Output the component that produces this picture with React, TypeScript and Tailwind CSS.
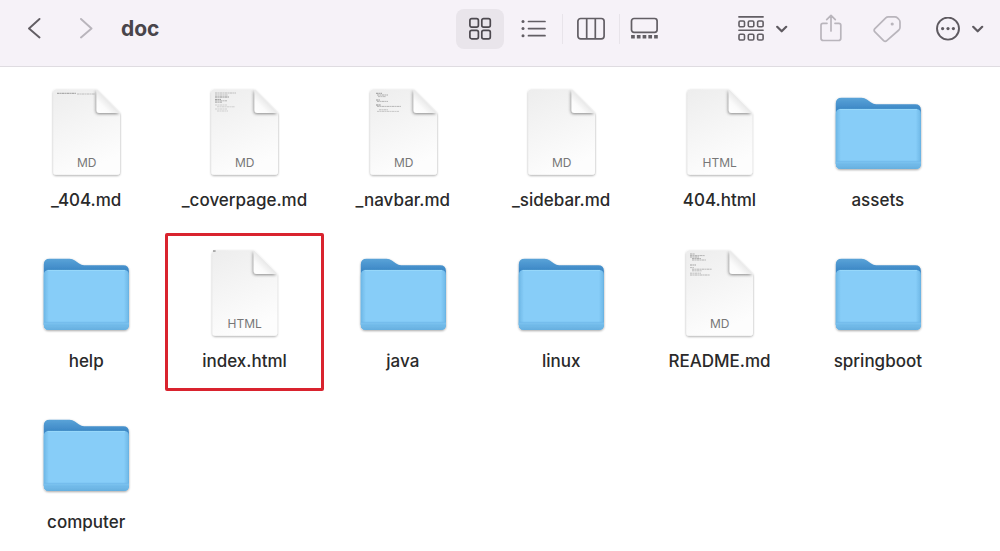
import { useState, type ReactNode } from "react";

type Mark = [x: number, y: number, width: number, tone: number];

type Entry = {
  name: string;
  kind: "folder" | "MD" | "HTML";
  preview?: Mark[];
  highlighted?: boolean;
};

const entries: Entry[] = [
  {
    name: "_404.md",
    kind: "MD",
    preview: [
      [19, 9.3, 19, 0.5],
      [39, 10, 18, 0.3],
    ],
  },
  {
    name: "_coverpage.md",
    kind: "MD",
    preview: [
      [19, 9, 21, 0.3],
      [19, 11, 13, 0.3],
      [19, 13, 14, 0.55],
      [19, 15.4, 6, 0.5],
      [19, 16.8, 12, 0.35],
      [19, 18.2, 7, 0.4],
      [19, 21, 12, 0.2],
      [21, 22.8, 18, 0.2],
      [19, 25, 12, 0.2],
      [21, 27, 11, 0.2],
    ],
  },
  {
    name: "_navbar.md",
    kind: "MD",
    preview: [
      [21, 9.3, 6, 0.5],
      [22, 11, 11, 0.4],
      [23, 12.6, 8, 0.3],
      [21, 16, 4, 0.5],
      [22, 17.4, 11, 0.35],
      [21, 21, 5, 0.6],
      [22, 22.4, 24, 0.35],
      [24, 25.8, 9, 0.3],
      [22, 27.4, 22, 0.25],
    ],
  },
  { name: "_sidebar.md", kind: "MD" },
  { name: "404.html", kind: "HTML" },
  { name: "assets", kind: "folder" },
  { name: "help", kind: "folder" },
  { name: "index.html", kind: "HTML", highlighted: true, preview: [[17, 6, 3, 0.8]] },
  { name: "java", kind: "folder" },
  { name: "linux", kind: "folder" },
  {
    name: "README.md",
    kind: "MD",
    preview: [
      [19, 9, 5, 0.4],
      [19, 10.6, 15, 0.35],
      [19, 12, 9, 0.4],
      [21, 13.6, 9, 0.4],
      [21, 15, 14, 0.35],
      [19, 20, 6, 0.45],
      [19, 22.6, 4, 0.3],
      [21, 24.2, 20, 0.35],
      [21, 25.8, 10, 0.3],
      [19, 28.2, 11, 0.3],
      [19, 30, 20, 0.35],
    ],
  },
  { name: "springboot", kind: "folder" },
  { name: "computer", kind: "folder" },
];

const pagePath = {
  MD: "M18.3 5.6H58.6L82 29V88q0 2.700-2.700 2.700H18q-2.700 0-2.700-2.700V8.600q0-3 3-3z",
  HTML: "M19.500 5.600H57.800L81.200 29V88q0 2.700-2.700 2.700H19.200q-2.700 0-2.700-2.700V8.600q0-3 3-3z",
};

const foldPath = {
  MD: "M58.600 5.600L82 29H61.600q-3 0-3-3z",
  HTML: "M57.800 5.600L81.200 29H60.800q-3 0-3-3z",
};

function SharedGradients() {
  return (
    <svg className="absolute size-0" aria-hidden="true">
      <defs>
        <linearGradient id="paper" x1="0" y1="0" x2="0.350" y2="1">
          <stop offset="0" stopColor="#ededed" />
          <stop offset="0.500" stopColor="#f5f5f5" />
          <stop offset="1" stopColor="#fdfdfd" />
        </linearGradient>
        <linearGradient id="fold" x1="0" y1="1" x2="0.500" y2="0.500">
          <stop offset="0" stopColor="#ffffff" />
          <stop offset="0.550" stopColor="#fbfbfb" />
          <stop offset="1" stopColor="#e9e9e9" />
        </linearGradient>
        <linearGradient id="folderBack" x1="0" y1="0" x2="0" y2="1">
          <stop offset="0" stopColor="#5aa3d8" />
          <stop offset="0.160" stopColor="#3d88c6" />
          <stop offset="1" stopColor="#3d88c6" />
        </linearGradient>
        <linearGradient id="folderEdge" x1="0" y1="0" x2="1" y2="0">
          <stop offset="0" stopColor="#6db7e6" />
          <stop offset="0.060" stopColor="#87cdf8" />
          <stop offset="0.940" stopColor="#87cdf8" />
          <stop offset="1" stopColor="#6db7e6" />
        </linearGradient>
        <linearGradient id="folderBase" x1="0" y1="0" x2="0" y2="1">
          <stop offset="0" stopColor="#7cc3f0" />
          <stop offset="1" stopColor="#66afdf" />
        </linearGradient>
        <filter id="iconShadow" x="-10%" y="-10%" width="120%" height="120%">
          <feDropShadow dx="0" dy="0.900" stdDeviation="0.800" floodColor="#000" floodOpacity="0.360" />
        </filter>
        <filter id="foldShadow" x="-30%" y="-30%" width="160%" height="160%">
          <feDropShadow dx="-0.800" dy="1" stdDeviation="1.500" floodColor="#000" floodOpacity="0.450" />
        </filter>
        <clipPath id="clipMD">
          <path d={pagePath.MD} />
        </clipPath>
        <clipPath id="clipHTML">
          <path d={pagePath.HTML} />
        </clipPath>
      </defs>
    </svg>
  );
}

function FolderIcon() {
  return (
    <svg viewBox="0 0 96 96" className="size-24" aria-hidden="true">
      <g filter="url(#iconShadow)">
        <path
          d="M5.800 19.500q0-5.800 5.800-5.800h20q3 0 5.300 1.700l4.200 3.200q2.200 1.700 5 1.700h39.200q5.600 0 5.600 5.600v53.500q0 5.300-5.300 5.300h-74.500q-5.300 0-5.300-5.300z"
          fill="url(#folderBack)"
        />
        <path
          d="M5.800 30q0-5 5-5h75.100q5 0 5 5v49.400q0 5.500-5.500 5.500h-74.100q-5.500 0-5.500-5.500z"
          fill="url(#folderEdge)"
        />
      </g>
      <path d="M5.800 77.500h85.100v1.900q0 5.500-5.500 5.500h-74.100q-5.500 0-5.500-5.500z" fill="url(#folderBase)" />
      <path d="M6 77.300h84.500" stroke="#6fb8e8" strokeWidth="0.800" />
      <path d="M6 80.300h84.500" stroke="#6cb5e5" strokeWidth="0.500" />
      <path d="M9.500 25.400h77.500" stroke="#9ddafb" strokeWidth="0.800" />
    </svg>
  );
}

function DocumentIcon({ kind, preview = [] }: { kind: "MD" | "HTML"; preview?: Mark[] }) {
  return (
    <svg viewBox="0 0 96 96" className="size-24" aria-hidden="true">
      <path d={pagePath[kind]} fill="url(#paper)" filter="url(#iconShadow)" />
      {preview.map(([x, y, width, tone], i) => (
        <path
          key={i}
          d={`M${x} ${y}h${width}`}
          stroke="#333"
          strokeWidth="0.900"
          strokeDasharray="2.600 0.500 1.500 0.400"
          opacity={tone}
        />
      ))}
      <g clipPath={kind === "MD" ? "url(#clipMD)" : "url(#clipHTML)"}>
        <path d={foldPath[kind]} fill="url(#fold)" filter="url(#foldShadow)" />
      </g>
      <text x="48.700" y="83" textAnchor="middle" fontFamily="Inter, sans-serif" fontSize="12" fill="#777">
        {kind}
      </text>
    </svg>
  );
}

function Chevron() {
  return (
    <svg viewBox="0 0 12 12" className="size-3" fill="none" stroke="#5e5a60" strokeWidth="2.200" strokeLinecap="round" strokeLinejoin="round" aria-hidden="true">
      <path d="M1.200 3.800 5.700 8.300 10.200 3.800" />
    </svg>
  );
}

function GridIcon() {
  return (
    <svg viewBox="0 0 24 24" className="size-6" fill="none" stroke="#4d494f" strokeWidth="1.700" aria-hidden="true">
      <rect x="1.900" y="1.600" width="8.500" height="8.500" rx="1.800" />
      <rect x="13.800" y="1.600" width="8.500" height="8.500" rx="1.800" />
      <rect x="1.900" y="13.300" width="8.500" height="8.500" rx="1.800" />
      <rect x="13.800" y="13.300" width="8.500" height="8.500" rx="1.800" />
    </svg>
  );
}

function ListIcon() {
  return (
    <svg viewBox="0 0 26 24" className="h-6 w-[26px]" fill="none" stroke="#625e64" strokeWidth="1.700" strokeLinecap="round" aria-hidden="true">
      <path d="M7.500 4.500H24M7.500 11.600H24M7.500 18.700H24" />
      <g fill="#625e64" stroke="none">
        <circle cx="2" cy="4.500" r="1.500" />
        <circle cx="2" cy="11.600" r="1.500" />
        <circle cx="2" cy="18.700" r="1.500" />
      </g>
    </svg>
  );
}

function ColumnsIcon() {
  return (
    <svg viewBox="0 0 28 24" className="h-6 w-7" fill="none" stroke="#625e64" strokeWidth="1.700" aria-hidden="true">
      <rect x="0.900" y="1.500" width="26.200" height="20.400" rx="2.800" />
      <path d="M9.700 1.500v20.400M18.300 1.500v20.400" />
    </svg>
  );
}

function GalleryIcon() {
  return (
    <svg viewBox="0 0 28 24" className="h-6 w-7" fill="none" stroke="#625e64" strokeWidth="1.700" aria-hidden="true">
      <rect x="1.500" y="1.500" width="25.600" height="13.800" rx="2.500" />
      <path d="M1.100 19.800h27" strokeWidth="3.400" strokeDasharray="3.700 2.050" />
    </svg>
  );
}

function GroupIcon() {
  return (
    <svg viewBox="0 0 26 26" className="size-[26px]" fill="none" stroke="#625e64" strokeWidth="1.600" strokeLinecap="round" aria-hidden="true">
      <path d="M0.900 0.900h24.200M0.900 14.300h24.200" />
      {[1, 10.3, 19.6].map((x) => (
        <g key={x}>
          <rect x={x} y="5" width="5.500" height="5.700" rx="1.300" />
          <rect x={x} y="18.300" width="5.500" height="5.700" rx="1.300" />
        </g>
      ))}
    </svg>
  );
}

function ShareIcon() {
  return (
    <svg viewBox="0 0 24 30" className="h-[30px] w-6" fill="none" stroke="#b9b5bc" strokeWidth="1.700" strokeLinecap="round" strokeLinejoin="round" aria-hidden="true">
      <path d="M8 9.300H4q-2 0-2 2v12.900q0 2.300 2.300 2.300h15.200q2.300 0 2.300-2.300V11.300q0-2-2-2H16M12 17V1.500M7.700 5.600 12 1.300l4.300 4.300" />
    </svg>
  );
}

function TagIcon() {
  return (
    <svg viewBox="0 0 28 28" className="size-7" fill="none" stroke="#b9b5bc" strokeWidth="1.700" strokeLinejoin="round" aria-hidden="true">
      <path d="M15.300 1.800h6.600q1.500 0 2.500 1l1.600 1.700q1 1 1 2.500v5.300q0 1.600-1.100 2.700L13.800 25.600q-1.600 1.500-3.200 0L1.900 16.800q-1.600-1.600 0-3.200L12.800 2.800q1-1 2.500-1z" />
      <circle cx="19.200" cy="9" r="1.600" fill="#b9b5bc" stroke="none" />
    </svg>
  );
}

function MoreIcon() {
  return (
    <svg viewBox="0 0 24 24" className="size-6" fill="none" stroke="#5e5a60" strokeWidth="1.900" aria-hidden="true">
      <circle cx="12" cy="11.600" r="11" />
      <g fill="#5e5a60" stroke="none">
        <circle cx="6.600" cy="11.600" r="1.600" />
        <circle cx="12" cy="11.600" r="1.600" />
        <circle cx="17.400" cy="11.600" r="1.600" />
      </g>
    </svg>
  );
}

const views: { label: string; icon: ReactNode; size: string; divided?: boolean }[] = [
  { label: "Icons", icon: <GridIcon />, size: "mr-1.5 w-12" },
  { label: "List", icon: <ListIcon />, size: "w-12" },
  { label: "Columns", icon: <ColumnsIcon />, size: "w-12", divided: true },
  { label: "Gallery", icon: <GalleryIcon />, size: "w-10", divided: true },
];

function NavButton({ label, path, tone }: { label: string; path: string; tone: string }) {
  return (
    <button type="button" aria-label={label} className="flex size-10 items-center justify-center">
      <svg viewBox="0 0 14 22" className="h-[22px] w-3.5" fill="none" stroke={tone} strokeWidth="1.900" strokeLinecap="round" strokeLinejoin="round" aria-hidden="true">
        <path d={path} />
      </svg>
    </button>
  );
}

function Toolbar() {
  const [view, setView] = useState("Icons");
  return (
    <header className="flex items-center border-b border-[#dfdce1] bg-[#f6f2f8] pt-[9px] pr-3 pb-[17px] pl-3.5">
      <nav className="flex gap-3">
        <NavButton label="Back" path="M12.500 1 2 10.500l10.500 9" tone="#625e64" />
        <NavButton label="Forward" path="M2 1l10.500 9.500L2 19.500" tone="#b9b5bc" />
      </nav>
      <h1 className="ml-[15px] text-[21px] leading-10 font-bold text-[#49454b]">doc</h1>

      <div className="ml-auto flex items-center">
        {views.map(({ label, icon, size, divided }) => (
          <div key={label} className="flex items-center">
            {divided && <span className="mx-1 h-[30px] w-px bg-[#e8e4ea]" />}
            <button
              type="button"
              aria-label={label}
              aria-pressed={view === label}
              onClick={() => setView(label)}
              className={`flex h-10 items-center justify-center rounded-lg ${size} ${view === label ? "bg-[#e9e5eb]" : ""}`}
            >
              {icon}
            </button>
          </div>
        ))}
      </div>

      <button type="button" aria-label="Group" className="ml-[70px] flex h-10 items-center gap-3 px-1">
        <GroupIcon />
        <Chevron />
      </button>
      <button type="button" aria-label="Share" className="ml-[19px] flex size-10 items-center justify-center">
        <ShareIcon />
      </button>
      <button type="button" aria-label="Edit tags" className="ml-4 flex size-10 items-center justify-center">
        <TagIcon />
      </button>
      <button type="button" aria-label="More actions" className="ml-[25px] flex h-10 items-center gap-3 px-1">
        <MoreIcon />
        <Chevron />
      </button>
    </header>
  );
}

export default function App() {
  return (
    <div className="min-h-screen bg-white font-['Inter',sans-serif] text-[#2a2a2a]">
      <SharedGradients />
      <Toolbar />
      <main className="pt-[5px] pr-[43px] pl-[7px]">
        <ul className="grid grid-cols-6 gap-y-[3px]">
          {entries.map(({ name, kind, preview, highlighted }) => (
            <li key={name}>
              <button
                type="button"
                className={`flex h-[158px] w-full flex-col items-center gap-2 border-3 pt-[9px] ${highlighted ? "rounded-xs border-[#d9232e]" : "border-transparent"}`}
              >
                {kind === "folder" ? <FolderIcon /> : <DocumentIcon kind={kind} preview={preview} />}
                <span className="text-[17px] leading-6 font-medium">{name}</span>
              </button>
            </li>
          ))}
        </ul>
      </main>
    </div>
  );
}
